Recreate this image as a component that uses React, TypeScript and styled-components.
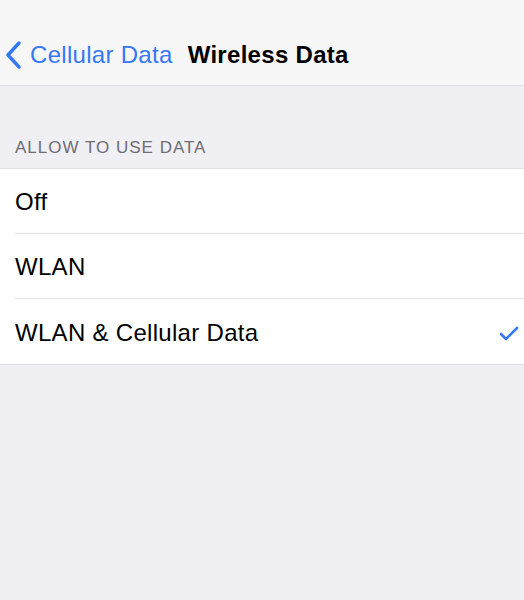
import React from "react";
import styled, { createGlobalStyle } from "styled-components";

const Global = createGlobalStyle`
  html, body { margin: 0; padding: 0; background: #efeff4; }
  body { font-family: "Liberation Sans", Arial, sans-serif; -webkit-font-smoothing: antialiased; }
`;

const Page = styled.div`
  width: 524px;
  height: 600px;
  background: #efeff4;
  display: flex;
  flex-direction: column;
`;

const NavBar = styled.div`
  height: 86px;
  background: #f7f7f7;
  border-bottom: 1px solid #dcdce0;
  display: flex;
  align-items: flex-end;
  padding-bottom: 16px;
  box-sizing: border-box;
`;

const BackButton = styled.div`
  display: flex;
  align-items: center;
  color: #3478f6;
  font-size: 24px;
  letter-spacing: 0.3px;
  padding-left: 6px;
  gap: 8px;
`;

const Title = styled.div`
  font-size: 24px;
  font-weight: 700;
  letter-spacing: 0.3px;
  color: #000;
  margin-left: 15px;
`;

const SectionHeader = styled.div`
  padding: 52px 0 0 15px;
  height: 82px;
  box-sizing: border-box;
  font-size: 17px;
  color: #6d6d72;
  letter-spacing: 1px;
`;

const Group = styled.div`
  background: #fff;
  border-top: 1px solid #e0e0e4;
  border-bottom: 1px solid #e0e0e4;
`;

const Row = styled.div<{ $last?: boolean }>`
  height: 65px;
  margin-left: 15px;
  padding-right: 5px;
  padding-top: 2px;
  box-sizing: border-box;
  display: flex;
  align-items: center;
  justify-content: space-between;
  border-bottom: ${(p) => (p.$last ? "none" : "1px solid #e4e4e8")};
  font-size: 24px;
  letter-spacing: 0.3px;
  color: #000;
`;

const Check = () => (
  <svg width="20" height="16" viewBox="0 0 20 16">
    <path d="M2 9 L7 14 L18 3" fill="none" stroke="#3478f6" strokeWidth="2.6" strokeLinecap="round" strokeLinejoin="round" />
  </svg>
);

const Chevron = () => (
  <svg width="16" height="28" viewBox="0 0 16 28">
    <path d="M13 2 L2 14 L13 26" fill="none" stroke="#3478f6" strokeWidth="3.4" strokeLinecap="round" strokeLinejoin="round" />
  </svg>
);

const options = ["Off", "WLAN", "WLAN & Cellular Data"];
const selected = 2;

export default function App() {
  return (
    <Page>
      <Global />
      <NavBar>
        <BackButton>
          <Chevron />
          <span>Cellular Data</span>
        </BackButton>
        <Title>Wireless Data</Title>
      </NavBar>
      <SectionHeader>ALLOW TO USE DATA</SectionHeader>
      <Group>
        {options.map((o, i) => (
          <Row key={o} $last={i === options.length - 1}>
            <span>{o}</span>
            {i === selected && <Check />}
          </Row>
        ))}
      </Group>
    </Page>
  );
}
